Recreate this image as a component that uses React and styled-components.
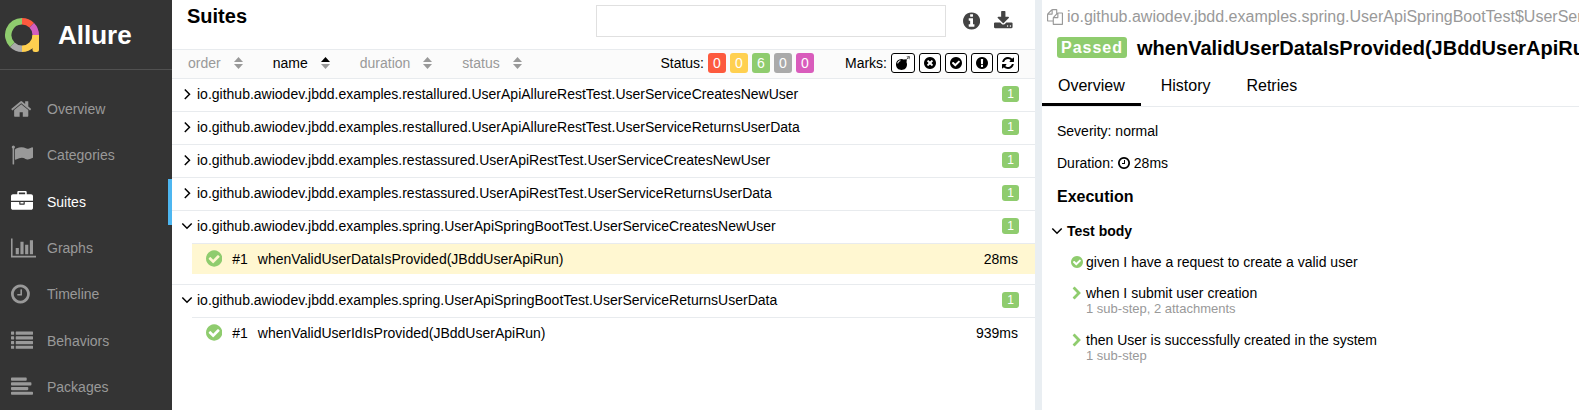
import React from "react";
import styled, { createGlobalStyle } from "styled-components";

const GlobalStyle = createGlobalStyle`
  * { box-sizing: border-box; }
  body {
    margin: 0;
    background: #fff;
    color: #000;
    font: 14px/20px "Liberation Sans", Arial, sans-serif;
    overflow: hidden;
  }
  button, input { font: inherit; color: inherit; }
  a { color: inherit; text-decoration: none; }
  h1, h2, h3, p, ul { margin: 0; padding: 0; }
  ul { list-style: none; }
`;

const green = "#8fcc6e";
const line = "#e8ebee";

const disc = "m0 0q0 209-103 385.5t-279.5 279.5-385.5 103-385.5-103-279.5-279.5-103-385.5 103-385.5 279.5-279.5 385.5-103 385.5 103 279.5 279.5 103 385.5z";
const withDisc = (inner) => `${inner}M1664 896${disc}`;

const icons = {
  home: { w: 1792, d: "M1472 992v480q0 26-19 45t-45 19h-384v-384h-256v384h-384q-26 0-45-19t-19-45v-480q0-1 .5-3t.5-3l575-474 575 474q1 2 1 6zm223-69l-62 74q-8 9-21 11h-3q-13 0-21-7l-692-577-692 577q-12 8-24 7-13-2-21-11l-62-74q-8-10-7-23.5t11-21.5l719-599q32-26 76-26t76 26l244 204v-195q0-14 9-23t23-9h192q14 0 23 9t9 23v408l219 182q10 8 11 21.5t-7 23.5z" , x: 64 },
  flag: { w: 1792, d: "M320 256q0 72-64 110v1266q0 13-9.500 22.500t-22.500 9.500h-64q-13 0-22.500-9.500t-9.500-22.500v-1266q-64-38-64-110 0-53 37.500-90.500t90.500-37.500 90.500 37.500 37.500 90.500zm1472 64v763q0 25-12.500 38.500t-39.500 27.500q-215 116-369 116-61 0-123.500-22t-108.500-48-115.500-48-142.500-22q-192 0-464 146-17 9-33 9-26 0-45-19t-19-45v-742q0-32 31-55 21-14 79-43 236-120 421-120 107 0 200 29t219 88q38 19 88 19 54 0 117.500-21t110-47 88-47 54.500-21q26 0 45 19t19 45z" },
  briefcase: { w: 1792, d: "M640 256h512v-128h-512v128zm1152 640v480q0 66-47 113t-113 47h-1472q-66 0-113-47t-47-113v-480h672v160q0 26 19 45t45 19h320q26 0 45-19t19-45v-160h672zm-768 0v128h-256v-128h256zm768-480v384h-1792v-384q0-66 47-113t113-47h352v-160q0-40 28-68t68-28h576q40 0 68 28t28 68v160h352q66 0 113 47t47 113z" },
  chart: { w: 2048, d: "M640 896v512h-256v-512h256zm384-512v1024h-256v-1024h256zm1024 1152v128h-2048v-1536h128v1408h1920zm-640-896v768h-256v-768h256zm384-384v1152h-256v-1152h256z" },
  clock: { w: 1536, x: 128, d: withDisc("M1024 544v448q0 14-9 23t-23 9h-320q-14 0-23-9t-9-23v-64q0-14 9-23t23-9h224v-352q0-14 9-23t23-9h64q14 0 23 9t9 23zm416 352q0-148-73-273t-198-198-273-73-273 73-198 198-73 273 73 273 198 198 273 73 273-73 198-198 73-273z") },
  list: { w: 1792, d: [128, 512, 896, 1280].map((y) => `M32 ${y}h192q32 0 32 32v192q0 32-32 32h-192q-32 0-32-32v-192q0-32 32-32zM416 ${y}h1344q32 0 32 32v192q0 32-32 32h-1344q-32 0-32-32v-192q0-32 32-32z`).join("") },
  align: { w: 1792, d: [[128, 1152], [512, 1536], [896, 1280], [1280, 1664]].map(([y, w]) => `M64 ${y}h${w}q64 0 64 64v128q0 64-64 64h-${w}q-64 0-64-64v-128q0-64 64-64z`).join("") },
  info: { w: 1536, x: 128, d: withDisc("M1152 1376v-160q0-14-9-23t-23-9h-96v-512q0-14-9-23t-23-9h-320q-14 0-23 9t-9 23v160q0 14 9 23t23 9h96v320h-96q-14 0-23 9t-9 23v160q0 14 9 23t23 9h448q14 0 23-9t9-23zm-128-896v-160q0-14-9-23t-23-9h-192q-14 0-23 9t-9 23v160q0 14 9 23t23 9h192q14 0 23-9t9-23z") },
  download: { w: 1664, x: 64, d: "M1344 1344q0-26-19-45t-45-19-45 19-19 45 19 45 45 19 45-19 19-45zm256 0q0-26-19-45t-45-19-45 19-19 45 19 45 45 19 45-19 19-45zm128-224v320q0 40-28 68t-68 28h-1472q-40 0-68-28t-28-68v-320q0-40 28-68t68-28h465l135 136q58 56 136 56t136-56l136-136h464q40 0 68 28t28 68zm-325-569q17 41-14 70l-448 448q-18 19-45 19t-45-19l-448-448q-31-29-14-70 17-39 59-39h256v-448q0-26 19-45t45-19h256q26 0 45 19t19 45v448h256q42 0 59 39z" },
  times: { w: 1536, x: 128, d: withDisc("M1277 1122q0-26-19-45l-181-181 181-181q19-19 19-45 0-27-19-46l-90-90q-19-19-46-19-26 0-45 19l-181 181-181-181q-19-19-45-19-27 0-46 19l-90 90q-19 19-19 46 0 26 19 45l181 181-181 181q-19 19-19 45 0 27 19 46l90 90q19 19 46 19 26 0 45-19l181-181 181 181q19 19 45 19 27 0 46-19l90-90q19-19 19-46z") },
  check: { w: 1536, x: 128, d: withDisc("M1412 734q0-28-18-46l-91-90q-19-19-45-19t-45 19l-408 407-226-226q-19-19-45-19t-45 19l-91 90q-18 18-18 46 0 27 18 45l362 362q19 19 45 19 27 0 46-19l543-543q18-18 18-45z") },
  exclamation: { w: 1536, x: 128, d: "M896 128q209 0 385.500 103t279.500 279.500 103 385.500-103 385.500-279.500 279.500-385.500 103-385.500-103-279.500-279.500-103-385.500 103-385.500 279.500-279.500 385.500-103zm128 1247v-190q0-14-9-23.500t-22-9.500h-192q-13 0-23 10t-10 23v190q0 13 10 23t23 10h192q13 0 22-9.500t9-23.500zm-2-344l18-621q0-12-10-18-10-8-24-8h-220q-14 0-24 8-10 6-10 18l17 621q0 10 10 17.500t24 7.500h185q14 0 23.500-7.500t10.500-17.500z" },
  refresh: { w: 1536, x: 128, d: "M1639 1056q0 5-1 7-64 268-268 434.500t-478 166.500q-146 0-282.500-55t-243.500-157l-129 129q-19 19-45 19t-45-19-19-45v-448q0-26 19-45t45-19h448q26 0 45 19t19 45-19 45l-137 137q71 66 161 102t187 36q134 0 250-65t186-179q11-17 53-117 8-23 30-23h192q13 0 22.500 9.500t9.500 22.500zm25-800v448q0 26-19 45t-45 19h-448q-26 0-45-19t-19-45 19-45l138-138q-148-137-349-137-134 0-250 65t-186 179q-11 17-53 117-8 23-30 23h-199q-13 0-22.500-9.500t-9.500-22.500v-7q65-268 270-434.500t480-166.500q146 0 284 55.500t245 156.500l130-129q19-19 45-19t45 19 19 45z" },
  files: { w: 1792, d: "M1696 384q40 0 68 28t28 68v1216q0 40-28 68t-68 28h-960q-40 0-68-28t-28-68v-288h-544q-40 0-68-28t-28-68v-672q0-40 20-88t48-76l408-408q28-28 76-48t88-20h416q40 0 68 28t28 68v328q68-40 128-40h416zm-544 213l-299 299h299v-299zm-640-384l-299 299h299v-299zm196 647l316-316v-416h-384v416q0 40-28 68t-68 28h-416v640h512v-256q0-40 20-88t48-76zm956 804v-1152h-384v416q0 40-28 68t-68 28h-416v640h896z" },
  bomb: { w: 1792, d: "M571 589q-10-25-34-35t-49 0q-108 44-191 127t-127 191q-10 25 0 49t35 34q13 5 24 5 42 0 60-40 34-84 98.500-148.500t148.500-98.500q25-11 35-35t0-49zm942-356l46 46-244 243 68 68q19 19 19 45.500t-19 45.500l-64 64q89 161 89 343 0 143-55.500 273.500t-150 225-225 150-273.500 55.500-273.500-55.500-225-150-150-225-55.500-273.500 55.500-273.500 150-225 225-150 273.500-55.500q182 0 343 89l64-64q19-19 45.500-19t45.500 19l68 68zm8-56q-10 10-22 10-13 0-23-10l-91-90q-9-10-9-23t9-23q10-9 23-9t23 9l90 91q10 9 10 22.500t-10 22.500zm230 230q-11 9-23 9t-23-9l-90-91q-10-9-10-22.500t10-22.500q9-10 22.500-10t22.500 10l91 90q9 10 9 23t-9 23zm41-183q0 14-9 23t-23 9h-96q-14 0-23-9t-9-23 9-23 23-9h96q14 0 23 9t9 23zm-192-192v96q0 14-9 23t-23 9-23-9-9-23v-96q0-14 9-23t23-9 23 9 9 23zm151 55l-91 90q-10 10-22 10-13 0-23-10-10-9-10-22.500t10-22.500l90-91q10-9 23-9t23 9q9 10 9 23t-9 23z" },
  chevron: { w: 1280, x: 256, d: "M1363 941l-742 742q-19 19-45 19t-45-19l-166-166q-19-19-19-45t19-45l531-531-531-531q-19-19-19-45t19-45l166-166q19-19 45-19t45 19l742 742q19 19 19 45t-19 45z" },
};

const Glyph = styled.svg`
  flex: none;
  display: block;
  fill: currentColor;
`;

function Icon({ name, size }) {
  const { w, x = 0, d } = icons[name];
  return (
    <Glyph aria-hidden="true" width={(size * w) / 1792} height={size} viewBox={`${x} 0 ${w} 1792`}>
      <path fillRule="evenodd" d={d} />
    </Glyph>
  );
}

function Arrow({ open }) {
  return (
    <Glyph aria-hidden="true" width="12" height="12" viewBox="0 0 12 12">
      <path
        d={open ? "M1.300 3.500 6 8.200 10.700 3.500" : "M3.800 1.500 8.500 6.300 3.800 11"}
        fill="none" stroke="#000" strokeWidth="1.500"
      />
    </Glyph>
  );
}

function SortMark({ up }) {
  return (
    <Glyph aria-hidden="true" width="9" height="12" viewBox="0 0 9 12">
      <path d="M0 5 4.500 0 9 5z" fill={up ? "#000" : "#999"} />
      <path d="M0 7h9L4.500 12z" fill="#999" />
    </Glyph>
  );
}

function Logo() {
  return (
    <Glyph width="34" height="34" viewBox="0 0 34 34" role="img" aria-label="Allure logo">
      <g fill="none" strokeWidth="6.500">
        <path stroke="#fd5a3e" d="M17 3.250A13.750 13.750 0 0 1 26.720 7.280" />
        <path stroke="#d35ebe" d="M26.720 7.280A13.750 13.750 0 0 1 30.750 17" />
        <path stroke="#ffd050" d="M30.750 17A13.750 13.750 0 0 1 17 30.750" />
        <path stroke="#aaa" d="M17 30.750A13.750 13.750 0 0 1 7.280 26.720" />
        <path stroke={green} d="M7.280 26.720A13.750 13.750 0 0 1 17 3.250" />
      </g>
      <path fill="#ffd050" d="M27.500 17H34v14.500a2.500 2.500 0 0 1-2.500 2.500h-1.500a2.500 2.500 0 0 1-2.500-2.500z" />
    </Glyph>
  );
}

const Page = styled.div`
  display: grid;
  grid-template-columns: 172px minmax(0, 863fr) 7px minmax(0, 537fr);
  min-height: 100vh;
`;

const Sidebar = styled.aside`
  display: flex;
  flex-direction: column;
  background: #343434;
  color: #999;
`;

const Brand = styled.a`
  display: flex;
  align-items: center;
  gap: 19px;
  height: 70px;
  padding-left: 5px;
  border-bottom: 1px solid #505050;
  && { color: #fff; }
  font-size: 26px;
  font-weight: bold;
`;

const Nav = styled.nav`
  flex: 1;
  display: flex;
  flex-direction: column;
  padding-top: 16px;
`;

const NavLink = styled.a`
  flex: 1;
  min-height: 46px;
  max-height: 48px;
  display: grid;
  grid-template-columns: 36px 1fr;
  align-items: center;
  padding-left: 11px;
  border-right: 4px solid ${(p) => (p.$active ? "#4db6f0" : "transparent")};
  && { color: ${(p) => (p.$active ? "#fff" : "#999")}; }
`;

const Gutter = styled.div`
  background: #e9eef2;
`;

const Pane = styled.section`
  overflow: hidden;
`;

const PaneHeader = styled.header`
  display: flex;
  gap: 14px;
  height: 50px;
  padding: 5px 22px 0 15px;
  border-bottom: 1px solid ${line};
`;

const PaneTitle = styled.h1`
  flex: 1;
  font-size: 20px;
  line-height: 22px;
`;

const Search = styled.input`
  width: 350px;
  height: 32px;
  padding: 0 8px;
  border: 1px solid #e0e0e0;
  background: #fff;
`;

const IconButton = styled.button`
  display: flex;
  align-items: center;
  height: 32px;
  padding: 0;
  border: 0;
  background: none;
  color: #444;
`;

const Tools = styled.div`
  display: flex;
  gap: 14px;
  padding-left: 3px;
`;

const SortBar = styled.div`
  display: flex;
  align-items: center;
  height: 29px;
  padding: 0 16px 2px;
  border-bottom: 1px solid ${line};
  background: #fbfbfb;
`;

const Sorters = styled.div`
  flex: 1;
  display: flex;
  gap: 30px;
`;

const Sorter = styled.button`
  display: flex;
  align-items: center;
  gap: 13px;
  padding: 0;
  border: 0;
  background: none;
  && { color: ${(p) => (p.$active ? "#000" : "#999")}; }
`;

const Filters = styled.div`
  display: flex;
  align-items: center;
  gap: 4px;
`;

const Marks = styled(Filters)`
  margin-left: 31px;
`;

const StatusFilter = styled.button`
  width: 18px;
  height: 20px;
  padding: 0;
  border: 0;
  border-radius: 3px;
  background: ${(p) => p.$color};
  && { color: #fff; }
`;

const MarkFilter = styled.button`
  display: flex;
  align-items: center;
  justify-content: center;
  min-width: 22px;
  height: 20px;
  padding: 0 4px;
  border: 1px solid #000;
  border-radius: 3px;
  background: #fff;
`;

const Suite = styled.li`
  border-bottom: 1px solid ${(p) => (p.$last ? "transparent" : line)};
  padding-bottom: ${(p) => (p.$open ? "10px" : "0")};
`;

const SuiteRow = styled.div`
  display: flex;
  align-items: center;
  gap: 4px;
  height: 32px;
  padding: 0 16px 2px 9px;
`;

const SuiteName = styled.span`
  flex: 1;
`;

const Count = styled.span`
  width: 17px;
  height: 16px;
  border-radius: 3px;
  background: ${green};
  color: #fff;
  font-size: 12px;
  line-height: 16px;
  text-align: center;
`;

const Case = styled.a`
  display: flex;
  align-items: center;
  gap: 10px;
  height: 31px;
  margin-left: 20px;
  padding: 0 17px 1px 14px;
  border-top: 1px solid ${line};
  background: ${(p) => (p.$selected ? "#fff7d1" : "none")};
`;

const CaseName = styled.span`
  flex: 1;
`;

const Passed = styled.span`
  display: flex;
  color: ${green};
`;

const FullName = styled.div`
  display: flex;
  align-items: center;
  gap: 4px;
  height: 32px;
  padding: 1px 0 0 5px;
  color: #999;
  font-size: 16px;
  white-space: nowrap;
`;

const CaseTitle = styled.h2`
  display: flex;
  align-items: center;
  gap: 10px;
  height: 31px;
  padding-left: 15px;
  font-size: 20px;
  white-space: nowrap;
`;

const StatusLabel = styled.span`
  height: 21px;
  padding: 0 4px;
  border-radius: 3px;
  background: ${green};
  color: #fff;
  font-size: 16px;
  line-height: 21px;
  letter-spacing: 1px;
`;

const Tabs = styled.nav`
  display: flex;
  gap: 4px;
  height: 44px;
  border-bottom: 1px solid ${line};
`;

const Tab = styled.a`
  padding: 0 16px;
  border-bottom: 3px solid ${(p) => (p.$active ? "#000" : "transparent")};
  font-size: 16px;
  line-height: 46px;
`;

const Details = styled.div`
  padding: 8px 15px;
`;

const Field = styled.p`
  display: flex;
  align-items: center;
  gap: 4px;
  height: 32px;
`;

const SectionTitle = styled.h3`
  font-size: 16px;
  line-height: 36px;
`;

const StageTitle = styled.div`
  display: flex;
  align-items: center;
  gap: 4px;
  height: 32px;
  margin-left: -6px;
  font-weight: bold;
`;

const Steps = styled.ul`
  && { margin-top: 7px; }
`;

const Step = styled.li`
  display: grid;
  grid-template-columns: 12px 1fr;
  column-gap: 3px;
  padding: 0 0 0 14px;
  margin-bottom: 15px;
  line-height: 16px;
  color: ${green};
`;

const StepMark = styled.span`
  display: flex;
  justify-content: center;
  align-items: center;
  height: 16px;
`;

const StepText = styled.div`
  color: #000;
`;

const StepMeta = styled.div`
  color: #999;
  font-size: 13px;
`;

const nav = [
  ["home", "Overview"],
  ["flag", "Categories"],
  ["briefcase", "Suites"],
  ["chart", "Graphs"],
  ["clock", "Timeline"],
  ["list", "Behaviors"],
  ["align", "Packages"],
];

const sorters = ["order", "name", "duration", "status"];

const statuses = [
  ["failed", "#fd5a3e", 0],
  ["broken", "#ffd050", 0],
  ["passed", green, 6],
  ["skipped", "#aaa", 0],
  ["unknown", "#d95cbc", 0],
];

const marks = [
  ["bomb", "Flaky"],
  ["times", "New failed"],
  ["check", "New passed"],
  ["exclamation", "New broken"],
  ["refresh", "Retries"],
];

const base = "io.github.awiodev.jbdd.examples.";
const suites = [
  { name: "restallured.UserApiAllureRestTest.UserServiceCreatesNewUser" },
  { name: "restallured.UserApiAllureRestTest.UserServiceReturnsUserData" },
  { name: "restassured.UserApiRestTest.UserServiceCreatesNewUser" },
  { name: "restassured.UserApiRestTest.UserServiceReturnsUserData" },
  {
    name: "spring.UserApiSpringBootTest.UserServiceCreatesNewUser",
    test: { name: "whenValidUserDataIsProvided(JBddUserApiRun)", time: "28ms", selected: true },
  },
  {
    name: "spring.UserApiSpringBootTest.UserServiceReturnsUserData",
    test: { name: "whenValidUserIdIsProvided(JBddUserApiRun)", time: "939ms" },
  },
];

const steps = [
  { text: "given I have a request to create a valid user" },
  { text: "when I submit user creation", meta: "1 sub-step, 2 attachments" },
  { text: "then User is successfully created in the system", meta: "1 sub-step" },
];

export default function App() {
  return (
    <>
      <GlobalStyle />
      <Page>
        <Sidebar>
          <Brand href="#"><Logo />Allure</Brand>
          <Nav>
            {nav.map(([icon, label]) => (
              <NavLink key={label} href="#" $active={label === "Suites"}>
                <Icon name={icon} size={22} />
                <span>{label}</span>
              </NavLink>
            ))}
          </Nav>
        </Sidebar>

        <Pane>
          <PaneHeader>
            <PaneTitle>Suites</PaneTitle>
            <Search type="text" aria-label="Search suites" />
            <Tools>
              <IconButton aria-label="Information"><Icon name="info" size={20} /></IconButton>
              <IconButton aria-label="Download"><Icon name="download" size={20} /></IconButton>
            </Tools>
          </PaneHeader>
          <SortBar>
            <Sorters>
              {sorters.map((s) => (
                <Sorter key={s} $active={s === "name"}>{s}<SortMark up={s === "name"} /></Sorter>
              ))}
            </Sorters>
            <Filters>
              <span>Status:</span>
              {statuses.map(([label, color, n]) => (
                <StatusFilter key={label} title={label} $color={color}>{n}</StatusFilter>
              ))}
            </Filters>
            <Marks>
              <span>Marks:</span>
              {marks.map(([icon, label]) => (
                <MarkFilter key={icon} aria-label={label}><Icon name={icon} size={14} /></MarkFilter>
              ))}
            </Marks>
          </SortBar>
          <ul>
            {suites.map(({ name, test }, i) => (
              <Suite key={name} $open={!!test} $last={i === suites.length - 1}>
                <SuiteRow>
                  <Arrow open={!!test} />
                  <SuiteName>{base + name}</SuiteName>
                  <Count>1</Count>
                </SuiteRow>
                {test && (
                  <Case href="#" $selected={test.selected}>
                    <Passed><Icon name="check" size={19} /></Passed>
                    <span>#1</span>
                    <CaseName>{test.name}</CaseName>
                    <span>{test.time}</span>
                  </Case>
                )}
              </Suite>
            ))}
          </ul>
        </Pane>

        <Gutter />

        <Pane>
          <FullName>
            <Icon name="files" size={16} />
            <span>{base}spring.UserApiSpringBootTest$UserServiceCreatesNewUser.whenValidUserDataIsProvided</span>
          </FullName>
          <CaseTitle>
            <StatusLabel>Passed</StatusLabel>
            <span>whenValidUserDataIsProvided(JBddUserApiRun)</span>
          </CaseTitle>
          <Tabs>
            <Tab href="#" $active>Overview</Tab>
            <Tab href="#">History</Tab>
            <Tab href="#">Retries</Tab>
          </Tabs>
          <Details>
            <Field>Severity: normal</Field>
            <Field>Duration: <Icon name="clock" size={14} /> 28ms</Field>
            <SectionTitle>Execution</SectionTitle>
            <StageTitle><Arrow open />Test body</StageTitle>
            <Steps>
              {steps.map(({ text, meta }) => (
                <Step key={text}>
                  <StepMark><Icon name={meta ? "chevron" : "check"} size={14} /></StepMark>
                  <div>
                    <StepText>{text}</StepText>
                    {meta && <StepMeta>{meta}</StepMeta>}
                  </div>
                </Step>
              ))}
            </Steps>
          </Details>
        </Pane>
      </Page>
    </>
  );
}
